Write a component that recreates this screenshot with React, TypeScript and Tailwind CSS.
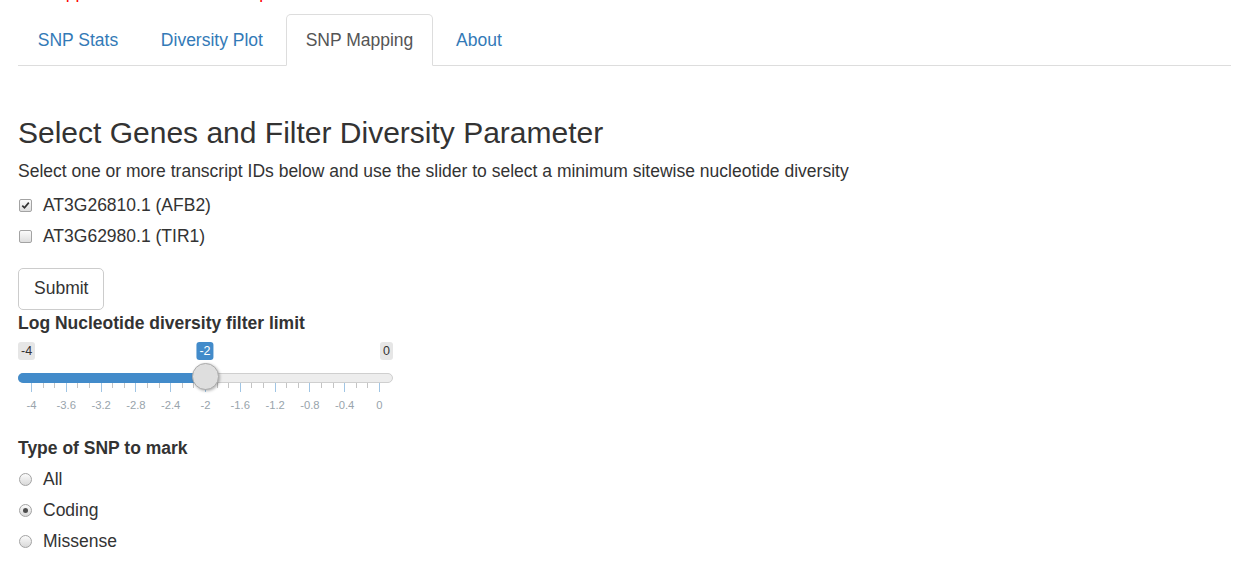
import React from "react";

const tabs = ["SNP Stats", "Diversity Plot", "SNP Mapping", "About"];
const gridLabels = ["-4", "-3.6", "-3.2", "-2.8", "-2.4", "-2", "-1.6", "-1.2", "-0.8", "-0.4", "0"];

// slider geometry (px, relative to slider box)
const GRID_START = 13;
const GRID_STEP = 34.8;
const HANDLE_X = GRID_START + GRID_STEP * 5;

function Checkbox({ checked }: { checked?: boolean }) {
  return (
    <span className="ml-[1px] flex h-[13px] w-[13px] items-center justify-center rounded-[2px] border border-[#a3a3a3] bg-gradient-to-b from-[#fbfbfb] to-[#dedede]">
      {checked && (
        <svg width="9" height="9" viewBox="0 0 9 9">
          <path d="M1.3 4.6 L3.5 6.8 L7.8 1.6" fill="none" stroke="#333" strokeWidth="1.7" />
        </svg>
      )}
    </span>
  );
}

function Radio({ checked }: { checked?: boolean }) {
  return (
    <span className="ml-[1px] flex h-[13px] w-[13px] items-center justify-center rounded-full border border-[#a3a3a3] bg-gradient-to-b from-[#fbfbfb] to-[#d9d9d9]">
      {checked && <span className="h-[5px] w-[5px] rounded-full bg-[#4d4d4d]" />}
    </span>
  );
}

function Slider() {
  const ticks: { x: number; major: boolean }[] = [];
  for (let i = 0; i < 10; i++) {
    ticks.push({ x: GRID_START + i * GRID_STEP, major: true });
    ticks.push({ x: GRID_START + i * GRID_STEP + GRID_STEP / 3, major: false });
    ticks.push({ x: GRID_START + i * GRID_STEP + (2 * GRID_STEP) / 3, major: false });
  }
  ticks.push({ x: GRID_START + 10 * GRID_STEP, major: true });

  return (
    <div className="relative mt-[6px] h-[72px] w-[375px]">
      <span className="absolute left-0 top-0 h-[18px] rounded-[3px] bg-[#e6e6e6] px-[3px] text-[12.5px] leading-[18px] text-[#333]">
        -4
      </span>
      <span className="absolute right-0 top-0 h-[18px] rounded-[3px] bg-[#e6e6e6] px-[3px] text-[12.5px] leading-[18px] text-[#333]">
        0
      </span>
      <span
        className="absolute top-0 h-[18px] -translate-x-1/2 rounded-[3px] bg-[#428bca] px-[3px] text-[12.5px] leading-[18px] text-white"
        style={{ left: HANDLE_X }}
      >
        -2
      </span>

      <div className="absolute left-0 right-0 top-[31px] h-[10px] rounded-full border border-[#cfcfcf] bg-[#ededed]" />
      <div
        className="absolute left-0 top-[31px] h-[10px] rounded-l-full bg-[#428bca]"
        style={{ width: HANDLE_X }}
      />

      {ticks.map((t, i) => (
        <span
          key={i}
          className={`absolute top-[41px] w-px ${t.major ? "h-[9px] bg-[#a0c5e4]" : "h-[5px] bg-[#c4c4c4]"}`}
          style={{ left: t.x }}
        />
      ))}
      {gridLabels.map((l, i) => (
        <span
          key={l}
          className="absolute top-[57px] -translate-x-1/2 text-[11.25px] leading-[13px] text-[#99a4ac]"
          style={{ left: GRID_START + i * GRID_STEP + 0.5 }}
        >
          {l}
        </span>
      ))}

      <span
        className="absolute top-[21px] h-[27px] w-[27px] rounded-full border border-[#ababab] bg-[#dedede] shadow-[1px_1px_3px_rgba(0,0,0,0.3)]"
        style={{ left: HANDLE_X - 13.5 }}
      />
    </div>
  );
}

export default function App() {
  return (
    <div className="min-h-[565px] bg-white font-['Liberation_Sans',Arial,sans-serif] text-[17.5px] leading-[25px] text-[#333]">
      {/* notice line, scrolled mostly out of view */}
      <div className="h-[14px] overflow-hidden pl-[18px]">
        <p className="-mt-[20px] whitespace-nowrap text-[#ff0000]">
          This app is under active development
        </p>
      </div>

      <ul className="ml-[18px] mr-[12px] flex border-b border-[#dddddd]">
        {tabs.map((t) => {
          const active = t === "SNP Mapping";
          return (
            <li key={t} className="-mb-px">
              <a
                className={`mr-[3.2px] block rounded-t-[5px] border px-[18.75px] py-[12.5px] ${
                  active
                    ? "border-[#dddddd] border-b-transparent bg-white text-[#555]"
                    : "border-transparent text-[#337ab7]"
                }`}
              >
                {t}
              </a>
            </li>
          );
        })}
      </ul>

      <div className="pl-[18px]">
        <h3 className="mt-[50px] text-[30px] leading-[33px] font-normal">
          Select Genes and Filter Diversity Parameter
        </h3>
        <p className="mt-[9.5px]">
          Select one or more transcript IDs below and use the slider to select a minimum sitewise nucleotide diversity
        </p>

        <div className="mt-[9px] flex flex-col gap-[6px]">
          <label className="flex items-center gap-[11px]">
            <Checkbox checked />
            AT3G26810.1 (AFB2)
          </label>
          <label className="flex items-center gap-[11px]">
            <Checkbox />
            AT3G62980.1 (TIR1)
          </label>
        </div>

        <button className="mt-[19px] rounded-[5px] border border-[#cccccc] bg-white px-[15px] py-[7.5px]">
          Submit
        </button>

        <div className="mt-[1px] font-bold">Log Nucleotide diversity filter limit</div>
        <Slider />

        <div className="mt-[22px] font-bold">Type of SNP to mark</div>
        <div className="mt-[6px] flex flex-col gap-[6px]">
          <label className="flex items-center gap-[11px]">
            <Radio />
            All
          </label>
          <label className="flex items-center gap-[11px]">
            <Radio checked />
            Coding
          </label>
          <label className="flex items-center gap-[11px]">
            <Radio />
            Missense
          </label>
        </div>
      </div>
    </div>
  );
}
